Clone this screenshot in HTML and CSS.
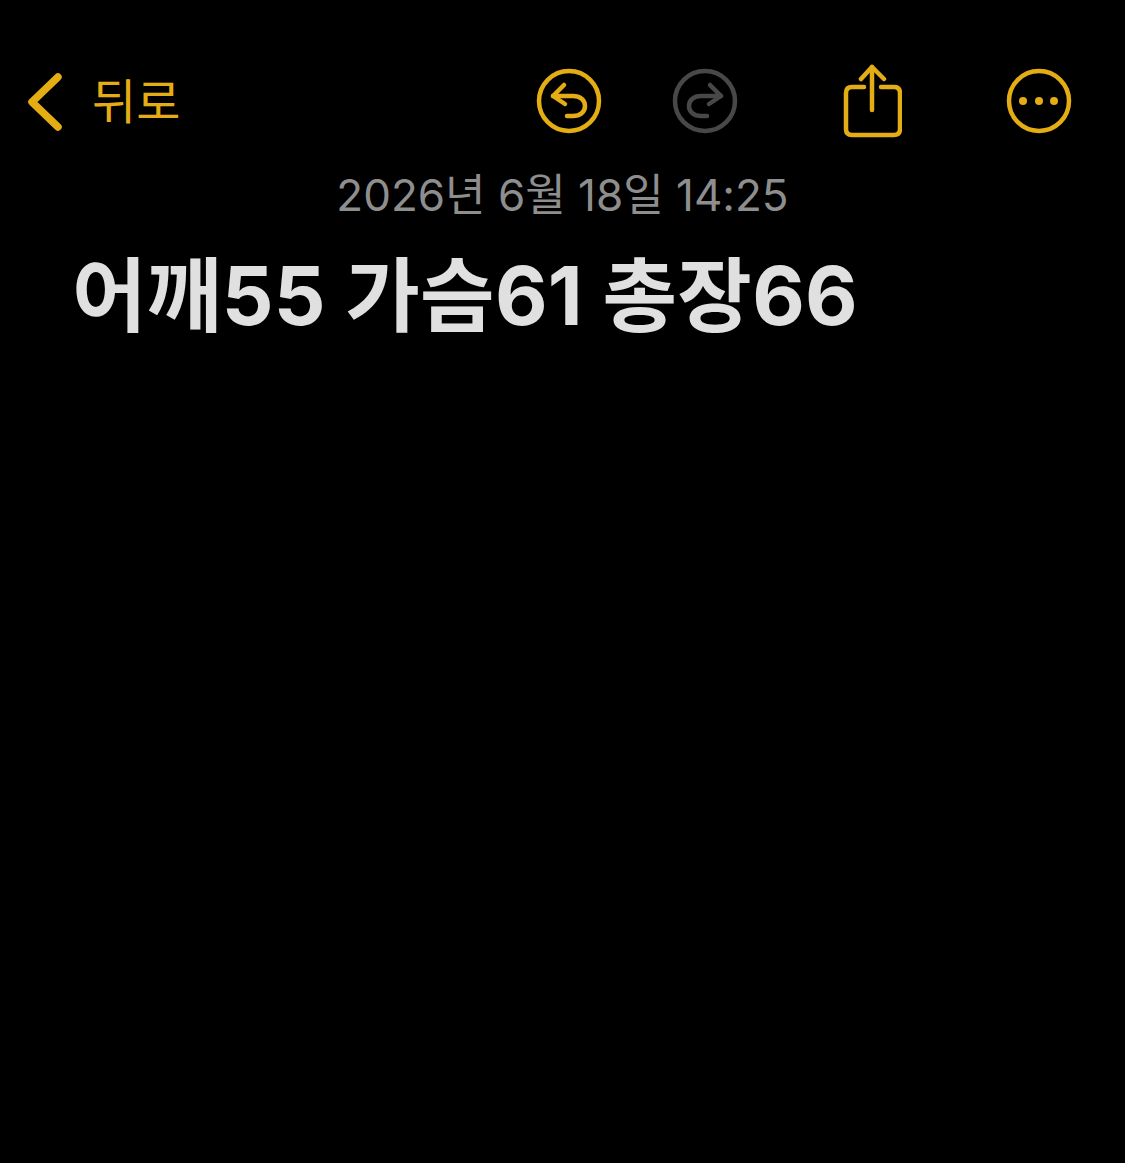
FILE: index.html
```html
<!DOCTYPE html>
<html lang="ko">
<head>
  <meta charset="UTF-8">
  <title>메모</title>
  <link rel="stylesheet" href="styles.css">
</head>
<body>
  <div class="toolbar">
    <div class="back">
      <svg class="chevron" width="36" height="60" viewBox="0 0 36 60"><path d="M31 6 L5 31 L31 56"/></svg>
      <span class="back-label">뒤로</span>
    </div>
    <div class="actions">
      <div class="history">
        <svg class="icon undo" width="66" height="66" viewBox="0 0 66 66"><circle cx="33" cy="33" r="30"/><path d="M28 17 L17 28 L29 36"/><path d="M17 28 H37 C44 28 49 32 49 38 C49 44 44 48 37 48 H31"/></svg>
        <svg class="icon redo" width="66" height="66" viewBox="0 0 66 66"><circle cx="33" cy="33" r="30"/><path d="M38 17 L49 28 L37 36"/><path d="M49 28 H29 C22 28 17 32 17 38 C17 44 22 48 29 48 H35"/></svg>
      </div>
      <svg class="icon share" width="60" height="74" viewBox="0 0 60 74"><path d="M22 23 H10 Q4 23 4 29 V65 Q4 71 10 71 H52 Q58 71 58 65 V29 Q58 23 52 23 H39"/><path d="M30 46 V3"/><path d="M19 15 L30 3 L42 15"/></svg>
      <svg class="icon more" width="66" height="66" viewBox="0 0 66 66"><circle cx="33" cy="33" r="30"/><circle class="dot" cx="17" cy="33" r="4"/><circle class="dot" cx="33" cy="33" r="4"/><circle class="dot" cx="48" cy="33" r="4"/></svg>
    </div>
  </div>
  <div class="note-date">2026년 6월 18일 14:25</div>
  <h1 class="note-title">어깨55 가슴61 총장66</h1>
</body>
</html>
```

FILE: styles.css
```css
* {
  margin: 0;
  padding: 0;
  box-sizing: border-box;
}

body {
  width: 1125px;
  height: 1163px;
  overflow: hidden;
  background: #000;
  font-family: "Inter", "Noto Sans CJK KR", sans-serif;
}

.toolbar {
  display: flex;
  justify-content: space-between;
  align-items: center;
  height: 74px;
  margin-top: 64px;
  padding: 0 53px 0 27px;
}

.back {
  display: flex;
  align-items: center;
  gap: 29px;
}

.back-label {
  padding-top: 2px;
  font-size: 48px;
  line-height: 60px;
  color: #e5ad14;
}

.actions {
  display: flex;
  align-items: center;
  gap: 104px;
}

.history {
  display: flex;
  align-items: center;
  gap: 70px;
}

.icon, .chevron {
  display: block;
  fill: none;
  stroke: #e5ad14;
  stroke-width: 4.5;
  stroke-linecap: round;
  stroke-linejoin: round;
}

.chevron {
  stroke-width: 7.5;
}

.redo {
  stroke: #48484a;
}

.more .dot {
  fill: #e5ad14;
  stroke: none;
}

.note-date {
  margin-top: 29px;
  text-align: center;
  font-size: 44px;
  line-height: 56px;
  color: #8e8e8e;
}

.note-title {
  margin-top: 25px;
  padding-left: 72px;
  font-size: 81px;
  line-height: 96px;
  font-weight: 700;
  letter-spacing: 0.3px;
  color: #e0e0e0;
  white-space: nowrap;
}
```
